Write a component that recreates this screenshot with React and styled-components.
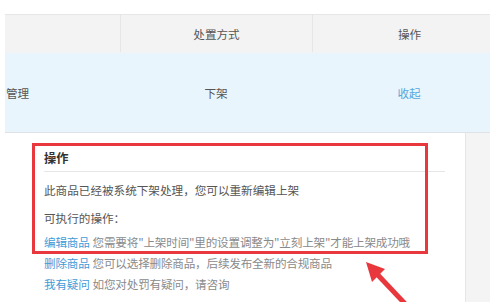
import React from 'react';
import styled, { createGlobalStyle } from 'styled-components';

const GlobalStyle = createGlobalStyle`
	html, body {
		margin: 0;
		padding: 0;
		background: #ffffff;
		overflow: hidden;
	}
	body {
		font-family: "Noto Sans CJK SC", "Noto Sans", "Liberation Sans", sans-serif;
		font-size: 11.6px;
		color: #555555;
	}
`;

const colors = {
	headBg: '#f3f3f3',
	rowBg: '#e9f5fc',
	line: '#e6e6e6',
	link: '#3f9bd8',
	muted: '#8a8a8a',
	text: '#555555',
	red: '#e8383d'
};

const Page = styled.div`
	width: 490px;
	height: 302px;
	padding: 14px 0 0 5px;
	box-sizing: border-box;
	overflow: hidden;
	display: flex;
	flex-direction: column;
`;

const Table = styled.div`
	display: flex;
	flex-direction: column;
	width: 501px;
`;

const Row = styled.div`
	display: grid;
	grid-template-columns: 115px 192px 194px;
	height: ${props => props.height}px;
	background: ${props => props.bg};
	border-top: ${props => props.head ? `1px solid ${colors.line}` : 'none'};
	border-bottom: 1px solid ${props => props.head ? colors.headBg : '#dfe3e6'};
	box-sizing: border-box;
`;

const Cell = styled.div`
	display: flex;
	align-items: center;
	justify-content: ${props => props.left ? 'flex-start' : 'center'};
	padding-left: ${props => props.left ? '1px' : '0'};
	border-left: ${props => props.divider ? `1px solid ${colors.line}` : 'none'};
	color: ${props => props.link ? '#56a8dc' : colors.text};
	font-size: 11.6px;
`;

const Lower = styled.div`
	display: flex;
	flex: 1;
`;

const Panel = styled.div`
	position: relative;
	width: 461px;
	box-sizing: border-box;
	background: #ffffff;
	border-right: 1px solid ${colors.line};
	padding: 14px 20px 0 39px;
`;

const Filler = styled.div`
	flex: 1;
	background: #f4f4f4;
`;

const Title = styled.div`
	height: 24px;
	line-height: 22px;
	font-weight: bold;
	color: #333333;
	font-size: 12.2px;
	border-bottom: 1px solid ${colors.line};
`;

const Para = styled.p`
	margin: ${props => props.mt}px 0 0;
	line-height: 21px;
	color: ${colors.text};
	white-space: nowrap;
`;

const ActionList = styled.div`
	display: flex;
	flex-direction: column;
	margin-top: 3px;
`;

const Action = styled.div`
	line-height: 21px;
	white-space: nowrap;
	letter-spacing: -0.2px;
	color: ${colors.muted};
`;

const ActionLink = styled.span`
	color: ${colors.link};
	margin-right: 3px;
`;

const Highlight = styled.div`
	position: absolute;
	left: 27px;
	top: 10px;
	width: 396px;
	height: 111px;
	box-sizing: border-box;
	border: 3px solid ${colors.red};
	pointer-events: none;
`;

const Arrow = styled.svg`
	position: absolute;
	left: 0;
	top: 0;
	pointer-events: none;
	overflow: visible;
`;

const actions = [
	{ label: '编辑商品', desc: '您需要将"上架时间"里的设置调整为"立刻上架"才能上架成功哦' },
	{ label: '删除商品', desc: '您可以选择删除商品，后续发布全新的合规商品' },
	{ label: '我有疑问', desc: '如您对处罚有疑问，请咨询' }
];

const App = () => (
	<>
		<GlobalStyle />
		<Page>
			<Table>
				<Row head height={39} bg={colors.headBg}>
					<Cell />
					<Cell divider>处置方式</Cell>
					<Cell divider>操作</Cell>
				</Row>
				<Row height={80} bg={colors.rowBg}>
					<Cell left>管理</Cell>
					<Cell>下架</Cell>
					<Cell link>收起</Cell>
				</Row>
			</Table>
			<Lower>
				<Panel>
					<Title>操作</Title>
					<Para mt={8}>此商品已经被系统下架处理，您可以重新编辑上架</Para>
					<Para mt={7}>可执行的操作：</Para>
					<ActionList>
						{actions.map(a => (
							<Action key={a.label}>
								<ActionLink>{a.label}</ActionLink>
								{a.desc}
							</Action>
						))}
					</ActionList>
					<Highlight />
					<Arrow width="461" height="170">
						<g transform="translate(-5,-132)">
							<line x1="410" y1="308" x2="376" y2="272" stroke={colors.red} strokeWidth="5" />
							<polygon points="366,261 385,268 372,281" fill={colors.red} />
						</g>
					</Arrow>
				</Panel>
				<Filler />
			</Lower>
		</Page>
	</>
);

export default App;
